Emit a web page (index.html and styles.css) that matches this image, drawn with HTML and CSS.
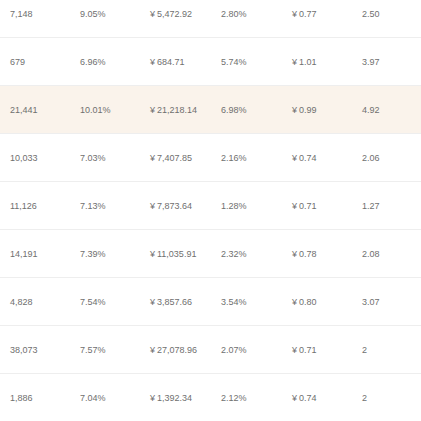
FILE: index.html
```html
<!DOCTYPE html>
<html lang="zh-CN">
<head>
    <meta charset="UTF-8">
    <meta name="viewport" content="width=device-width, initial-scale=1.0">
    <title>数据表</title>
    <link rel="stylesheet" href="styles.css">
</head>
<body>
    <div class="table">
        <div class="row"><span>7,148</span><span>9.05%</span><span><i>¥</i>5,472.92</span><span>2.80%</span><span><i>¥</i>0.77</span><span>2.50</span></div>
        <div class="row"><span>679</span><span>6.96%</span><span><i>¥</i>684.71</span><span>5.74%</span><span><i>¥</i>1.01</span><span>3.97</span></div>
        <div class="row active"><span>21,441</span><span>10.01%</span><span><i>¥</i>21,218.14</span><span>6.98%</span><span><i>¥</i>0.99</span><span>4.92</span></div>
        <div class="row"><span>10,033</span><span>7.03%</span><span><i>¥</i>7,407.85</span><span>2.16%</span><span><i>¥</i>0.74</span><span>2.06</span></div>
        <div class="row"><span>11,126</span><span>7.13%</span><span><i>¥</i>7,873.64</span><span>1.28%</span><span><i>¥</i>0.71</span><span>1.27</span></div>
        <div class="row"><span>14,191</span><span>7.39%</span><span><i>¥</i>11,035.91</span><span>2.32%</span><span><i>¥</i>0.78</span><span>2.08</span></div>
        <div class="row"><span>4,828</span><span>7.54%</span><span><i>¥</i>3,857.66</span><span>3.54%</span><span><i>¥</i>0.80</span><span>3.07</span></div>
        <div class="row"><span>38,073</span><span>7.57%</span><span><i>¥</i>27,078.96</span><span>2.07%</span><span><i>¥</i>0.71</span><span>2</span></div>
        <div class="row"><span>1,886</span><span>7.04%</span><span><i>¥</i>1,392.34</span><span>2.12%</span><span><i>¥</i>0.74</span><span>2</span></div>
    </div>
</body>
</html>
```

FILE: styles.css
```css
body {
    margin: 0;
    background-color: #fff;
    font-family: "Liberation Sans", "Noto Sans CJK SC", sans-serif;
    font-size: 9px;
    color: #6f6f6f;
    overflow: hidden;
}

.table {
    margin-top: -10px;
}

.row {
    display: grid;
    grid-template-columns: 70px 70px 71px 71px 70px 70px;
    align-items: center;
    height: 47px;
    border-bottom: 1px solid #eeeeee;
}

.row span {
    padding-left: 10px;
}

.row i {
    font-style: normal;
    margin-right: 2px;
}

.row.active {
    background-color: #faf3eb;
}
```
